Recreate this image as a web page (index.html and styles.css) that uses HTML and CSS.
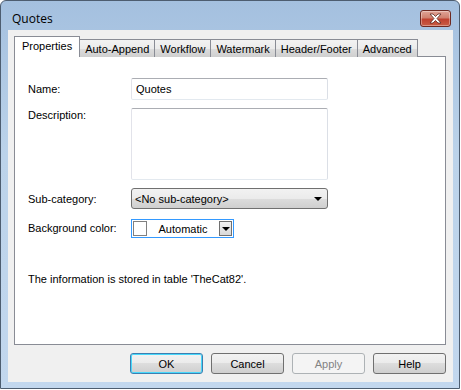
FILE: index.html
```html
<!DOCTYPE html>
<html lang="en">

<head>
  <meta charset="UTF-8">
  <title>Quotes</title>
  <link rel="stylesheet" href="styles.css">
</head>

<body>

  <div class="window">
    <div class="titlebar">
      <span class="title">Quotes</span>
      <button class="close-btn" title="Close">
        <svg width="15" height="11" viewBox="0 0 15 11">
          <path d="M2 1 L5 1 L7.5 3.5 L10 1 L13 1 L9 5.5 L13 10 L10 10 L7.5 7.5 L5 10 L2 10 L6 5.5 Z"
            fill="#fff" stroke="#5a2a22" stroke-width="0.8" stroke-linejoin="round" />
        </svg>
      </button>
    </div>

    <div class="client">
      <div class="tabs">
        <div class="tab active">Properties</div>
        <div class="tab">Auto-Append</div>
        <div class="tab">Workflow</div>
        <div class="tab">Watermark</div>
        <div class="tab">Header/Footer</div>
        <div class="tab">Advanced</div>
      </div>

      <div class="panel">
        <div class="form">
          <label class="lbl">Name:</label>
          <input type="text" class="textbox" value="Quotes">

          <label class="lbl lbl-top">Description:</label>
          <div class="textarea"></div>

          <label class="lbl">Sub-category:</label>
          <div class="combo">
            <span>&lt;No sub-category&gt;</span>
            <span class="arrow"></span>
          </div>

          <label class="lbl">Background color:</label>
          <div class="color-pick">
            <span class="swatch"></span>
            <span class="color-name">Automatic</span>
            <span class="color-drop"><span class="arrow"></span></span>
          </div>
        </div>

        <p class="info">The information is stored in table 'TheCat82'.</p>
      </div>

      <div class="buttons">
        <button class="btn default">OK</button>
        <button class="btn">Cancel</button>
        <button class="btn" disabled>Apply</button>
        <button class="btn">Help</button>
      </div>
    </div>
  </div>

</body>

</html>
```

FILE: styles.css
```css
body {
  margin: 0;
  background: #fff;
  font-family: "Liberation Sans", Arial, sans-serif;
  font-size: 11px;
  color: #000;
}

.window {
  width: 460px;
  height: 389px;
  box-sizing: border-box;
  border: 1px solid #4d5d70;
  border-radius: 6px 6px 0 0;
  background: linear-gradient(#a4c0df, #bcd3ea 40%, #c2d7ee);
  display: flex;
  flex-direction: column;
}

.titlebar {
  height: 29px;
  display: flex;
  align-items: flex-start;
  justify-content: space-between;
  padding: 0 8px 0 11px;
}

.title {
  font-family: "Open Sans", "Noto Sans", sans-serif;
  font-size: 12px;
  margin-top: 9px;
}

.close-btn {
  margin-top: 9px;
  width: 31px;
  height: 17px;
  padding: 0;
  border: 1px solid #6e2a22;
  border-radius: 3px;
  background: linear-gradient(#e0a497, #d0816f 45%, #c0412f 55%, #c95d45);
  display: flex;
  align-items: center;
  justify-content: center;
  box-shadow: inset 0 0 0 1px rgba(255, 255, 255, 0.35);
}

.client {
  flex: 1;
  margin: 0 6px 6px 7px;
  background: #f0f0f0;
  display: flex;
  flex-direction: column;
  padding: 7px 7px 8px 6px;
}

.tabs {
  display: flex;
  align-items: flex-end;
  height: 20px;
  margin-bottom: -1px;
  position: relative;
  z-index: 1;
}

.tab {
  height: 18px;
  box-sizing: border-box;
  padding: 0 5px;
  border: 1px solid #898c95;
  border-bottom: none;
  margin-right: -1px;
  background: linear-gradient(#f2f2f2, #ebebeb 50%, #dddddd 50%, #cfcfcf);
  line-height: 18px;
}

.tab.active {
  height: 21px;
  padding: 0 7px;
  background: #fff;
  line-height: 19px;
  margin-right: -1px;
}

.panel {
  flex: 1;
  background: #fff;
  border: 1px solid #898c95;
  padding: 21px 13px 0 13px;
}

.form {
  display: grid;
  grid-template-columns: 103px 197px;
  row-gap: 8px;
  align-items: center;
}

.lbl-top {
  align-self: start;
  margin-top: 1px;
}

.textbox {
  height: 22px;
  box-sizing: border-box;
  border: 1px solid #abadb3;
  border-color: #abadb3 #dbdfe6 #e3e9ef #e2e3ea;
  border-radius: 2px;
  padding: 0 4px;
  margin: 0;
  font: inherit;
}

.textarea {
  height: 72px;
  box-sizing: border-box;
  border: 1px solid #abadb3;
  border-color: #abadb3 #dbdfe6 #e3e9ef #e2e3ea;
  border-radius: 2px;
}

.combo {
  height: 21px;
  box-sizing: border-box;
  border: 1px solid #707070;
  border-radius: 3px;
  background: linear-gradient(#f2f2f2, #ebebeb 50%, #dddddd 50%, #cfcfcf);
  display: flex;
  align-items: center;
  justify-content: space-between;
  padding: 0 5px 0 3px;
  margin-top: 0;
}

.arrow {
  width: 0;
  height: 0;
  border-left: 4px solid transparent;
  border-right: 4px solid transparent;
  border-top: 4px solid #000;
}

.color-pick {
  width: 103px;
  height: 19px;
  box-sizing: border-box;
  border: 1px solid #3399ff;
  background: #fff;
  display: flex;
  align-items: center;
  padding: 0 1px;
  margin-top: 2px;
}

.swatch {
  width: 14px;
  height: 15px;
  box-sizing: border-box;
  border: 1px solid #808080;
  background: #fff;
}

.color-name {
  flex: 1;
  text-align: center;
}

.color-drop {
  width: 13px;
  height: 15px;
  box-sizing: border-box;
  border: 1px solid #707070;
  background: linear-gradient(#f2f2f2, #d8d8d8);
  display: flex;
  align-items: center;
  justify-content: center;
}

.color-drop .arrow {
  border-left-width: 4px;
  border-right-width: 4px;
  border-top-width: 4px;
}

.info {
  margin: 35px 0 0;
}

.buttons {
  display: flex;
  justify-content: flex-end;
  gap: 8px;
  margin-top: 8px;
}

.btn {
  width: 73px;
  height: 21px;
  padding: 0;
  border: 1px solid #707070;
  border-radius: 3px;
  background: linear-gradient(#f2f2f2, #ebebeb 50%, #dddddd 50%, #cfcfcf);
  font: inherit;
  color: #000;
}

.btn.default {
  border-color: #3c7fb1;
  box-shadow: inset 0 0 0 1px #48d8fb;
  background: linear-gradient(#eaf6fd, #d9f0fc 50%, #bee6fd 50%, #a7d9f5);
  background: linear-gradient(#f2f2f2, #ebebeb 50%, #dddddd 50%, #cfcfcf);
}

.btn:disabled {
  border-color: #adb2b5;
  background: #f4f4f4;
  color: #838383;
}
```
